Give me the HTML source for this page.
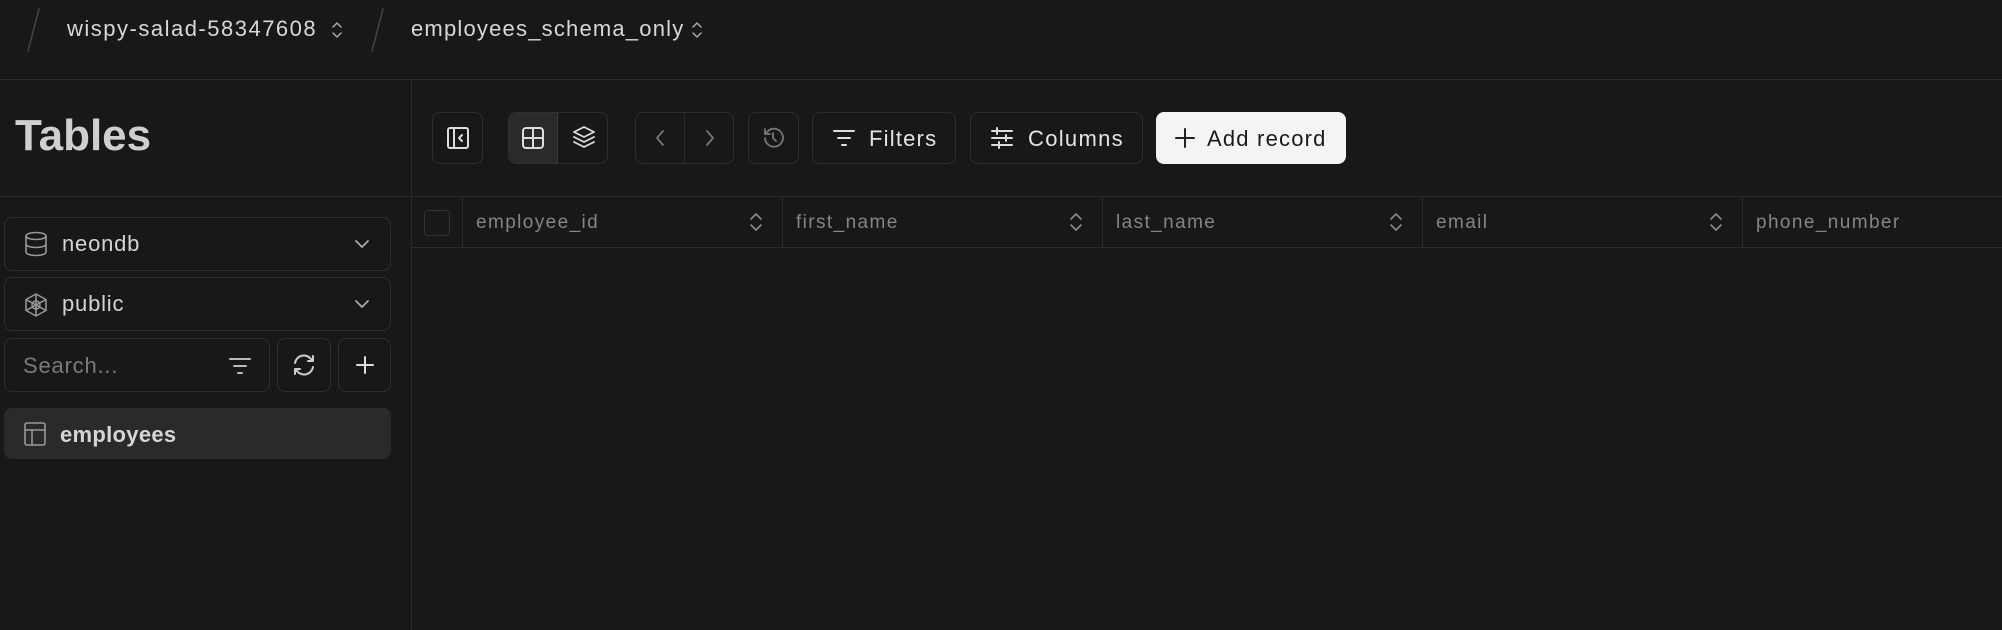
<!DOCTYPE html>
<html><head><meta charset="utf-8"><style>
*{box-sizing:border-box;margin:0;padding:0}
body{width:2002px;height:630px;background:#181818;font-family:"Liberation Sans",sans-serif;color:#d6d6d6;position:relative;overflow:hidden;letter-spacing:0.8px}
.a{position:absolute}
.b{position:absolute;border:1px solid #2f2f2f;border-radius:8px}
svg{position:absolute;fill:none;stroke-linecap:round;stroke-linejoin:round}
.h{position:absolute;top:197px;height:50px;border-left:1px solid #2b2b2b;color:#858585;font-size:19px;line-height:52px;padding-left:13px;letter-spacing:1.4px}
</style></head><body>
<div class="a" style="left:0;top:79px;width:2002px;height:1px;background:#2b2b2b"></div>
<svg style="left:24px;top:6px" width="20" height="48"><line x1="15" y1="3" x2="4" y2="45" stroke="#444" stroke-width="1.5"/></svg>
<div class="a" style="left:67px;top:16px;font-size:22px;color:#d8d8d8;letter-spacing:1.5px">wispy-salad-58347608</div>
<svg style="left:329px;top:18px" width="16" height="24"><path d="M4 9l4-4 4 4M4 15l4 4 4-4" stroke="#aaa" stroke-width="1.5"/></svg>
<svg style="left:368px;top:6px" width="20" height="48"><line x1="15" y1="3" x2="4" y2="45" stroke="#444" stroke-width="1.5"/></svg>
<div class="a" style="left:411px;top:16px;font-size:22px;color:#d8d8d8;letter-spacing:1.2px">employees_schema_only</div>
<svg style="left:689px;top:18px" width="16" height="24"><path d="M4 9l4-4 4 4M4 15l4 4 4-4" stroke="#aaa" stroke-width="1.5"/></svg>

<div class="a" style="left:411px;top:80px;width:1px;height:550px;background:#2b2b2b"></div>
<div class="a" style="left:0;top:196px;width:2002px;height:1px;background:#2b2b2b"></div>
<div class="a" style="left:15px;top:111px;font-size:44px;font-weight:bold;color:#cfcfcf;letter-spacing:0">Tables</div>

<div class="b" style="left:4px;top:217px;width:387px;height:54px"></div>
<svg style="left:22px;top:230px" width="28" height="28" stroke="#999" stroke-width="1.6"><ellipse cx="14" cy="6" rx="10" ry="3.5"/><path d="M4 6v16c0 2 4.5 3.5 10 3.5s10-1.5 10-3.5V6M4 14c0 2 4.5 3.5 10 3.5s10-1.5 10-3.5"/></svg>
<div class="a" style="left:62px;top:231px;font-size:22px;color:#d4d4d4">neondb</div>
<svg style="left:352px;top:234px" width="20" height="20"><path d="M4 7l6 6 6-6" stroke="#aaa" stroke-width="1.8"/></svg>

<div class="b" style="left:4px;top:277px;width:387px;height:54px"></div>
<svg style="left:22px;top:291px" width="28" height="28" stroke="#999" stroke-width="1.5"><circle cx="14" cy="14" r="4"/><path d="M14 3L24 8.5v11L14 25 4 19.5v-11zM14 3v22M4 8.5l20 11M24 8.5l-20 11"/></svg>
<div class="a" style="left:62px;top:291px;font-size:22px;color:#d4d4d4">public</div>
<svg style="left:352px;top:294px" width="20" height="20"><path d="M4 7l6 6 6-6" stroke="#aaa" stroke-width="1.8"/></svg>

<div class="b" style="left:4px;top:338px;width:266px;height:54px"></div>
<div class="a" style="left:23px;top:353px;font-size:22px;color:#7a7a7a">Search...</div>
<svg style="left:228px;top:354px" width="24" height="24" stroke="#bbb" stroke-width="2"><path d="M2 5h20M6 12h12M10 19h4"/></svg>
<div class="b" style="left:277px;top:338px;width:54px;height:54px"></div>
<svg style="left:291px;top:352px" width="26" height="26" stroke="#ccc" stroke-width="2"><path d="M4 11a9 9 0 0 1 16-4l2 2M22 4v5h-5M22 15a9 9 0 0 1-16 4l-2-2M4 22v-5h5"/></svg>
<div class="b" style="left:338px;top:338px;width:53px;height:54px"></div>
<svg style="left:353px;top:353px" width="24" height="24" stroke="#ddd" stroke-width="2"><path d="M12 4v16M4 12h16"/></svg>

<div class="a" style="left:4px;top:408px;width:387px;height:51px;background:#2a2a2a;border-radius:8px"></div>
<svg style="left:22px;top:420px" width="26" height="28" stroke="#999" stroke-width="1.6"><rect x="3" y="3" width="20" height="22" rx="2"/><path d="M3 10h20M10 10v15"/></svg>
<div class="a" style="left:60px;top:422px;font-size:22px;font-weight:bold;color:#d6d6d6;letter-spacing:0.3px">employees</div>

<div class="b" style="left:432px;top:112px;width:51px;height:52px"></div>
<svg style="left:445px;top:125px" width="26" height="26" stroke="#ddd" stroke-width="2"><rect x="3" y="3" width="20" height="20" rx="2"/><path d="M9 3v20M17 10l-3 3 3 3"/></svg>
<div class="b" style="left:508px;top:112px;width:100px;height:52px"></div>
<div class="a" style="left:509px;top:113px;width:49px;height:50px;background:#2a2a2a;border-right:1px solid #3a3a3a;border-radius:7px 0 0 7px"></div>
<svg style="left:520px;top:125px" width="26" height="26" stroke="#ddd" stroke-width="2"><rect x="3" y="3" width="20" height="20" rx="3"/><path d="M3 13h20M13 3v20"/></svg>
<svg style="left:570px;top:124px" width="28" height="28" stroke="#ddd" stroke-width="1.8"><path d="M14 3l10 5-10 5-10-5zM4 13l10 5 10-5M4 18l10 5 10-5"/></svg>
<div class="b" style="left:635px;top:112px;width:99px;height:52px"></div>
<div class="a" style="left:684px;top:113px;width:1px;height:50px;background:#2b2b2b"></div>
<svg style="left:650px;top:128px" width="20" height="20" stroke="#777" stroke-width="1.8"><path d="M13 3l-6 7 6 7"/></svg>
<svg style="left:700px;top:128px" width="20" height="20" stroke="#777" stroke-width="1.8"><path d="M7 3l6 7-6 7"/></svg>
<div class="b" style="left:748px;top:112px;width:51px;height:52px"></div>
<svg style="left:760px;top:125px" width="26" height="26" stroke="#777" stroke-width="1.8"><path d="M5 13a9 9 0 1 0 3-7L5 9M5 4v5h5M13 8v5l3 3"/></svg>
<div class="b" style="left:812px;top:112px;width:144px;height:52px"></div>
<svg style="left:832px;top:126px" width="24" height="24" stroke="#ddd" stroke-width="2"><path d="M2 5h20M6 12h12M10 19h4"/></svg>
<div class="a" style="left:869px;top:126px;font-size:22px;color:#e4e4e4;letter-spacing:1.2px">Filters</div>
<div class="b" style="left:970px;top:112px;width:173px;height:52px"></div>
<svg style="left:989px;top:125px" width="26" height="26" stroke="#ddd" stroke-width="2"><path d="M3 6h20M3 13h20M3 20h20M8 3v6M17 10v6M10 17v6"/></svg>
<div class="a" style="left:1028px;top:126px;font-size:22px;color:#e4e4e4;letter-spacing:1.3px">Columns</div>
<div class="a" style="left:1156px;top:112px;width:190px;height:52px;background:#f4f4f4;border-radius:8px"></div>
<svg style="left:1173px;top:126px" width="24" height="24" stroke="#222" stroke-width="2"><path d="M12 3v18M3 12h18"/></svg>
<div class="a" style="left:1207px;top:126px;font-size:22px;color:#1a1a1a;letter-spacing:1.2px">Add record</div>

<div class="a" style="left:411px;top:247px;width:1591px;height:1px;background:#2b2b2b"></div>
<div class="a" style="left:424px;top:210px;width:26px;height:26px;border:1px solid #333;border-radius:4px"></div>
<div class="h" style="left:462px;width:320px">employee_id</div>
<div class="h" style="left:782px;width:320px">first_name</div>
<div class="h" style="left:1102px;width:320px">last_name</div>
<div class="h" style="left:1422px;width:320px">email</div>
<div class="h" style="left:1742px;width:260px">phone_number</div>
<svg style="left:748px;top:210px" width="16" height="24"><path d="M3 9l5-5 5 5M3 15l5 5 5-5" stroke="#888" stroke-width="1.6"/></svg>
<svg style="left:1068px;top:210px" width="16" height="24"><path d="M3 9l5-5 5 5M3 15l5 5 5-5" stroke="#888" stroke-width="1.6"/></svg>
<svg style="left:1388px;top:210px" width="16" height="24"><path d="M3 9l5-5 5 5M3 15l5 5 5-5" stroke="#888" stroke-width="1.6"/></svg>
<svg style="left:1708px;top:210px" width="16" height="24"><path d="M3 9l5-5 5 5M3 15l5 5 5-5" stroke="#888" stroke-width="1.6"/></svg>
</body></html>
